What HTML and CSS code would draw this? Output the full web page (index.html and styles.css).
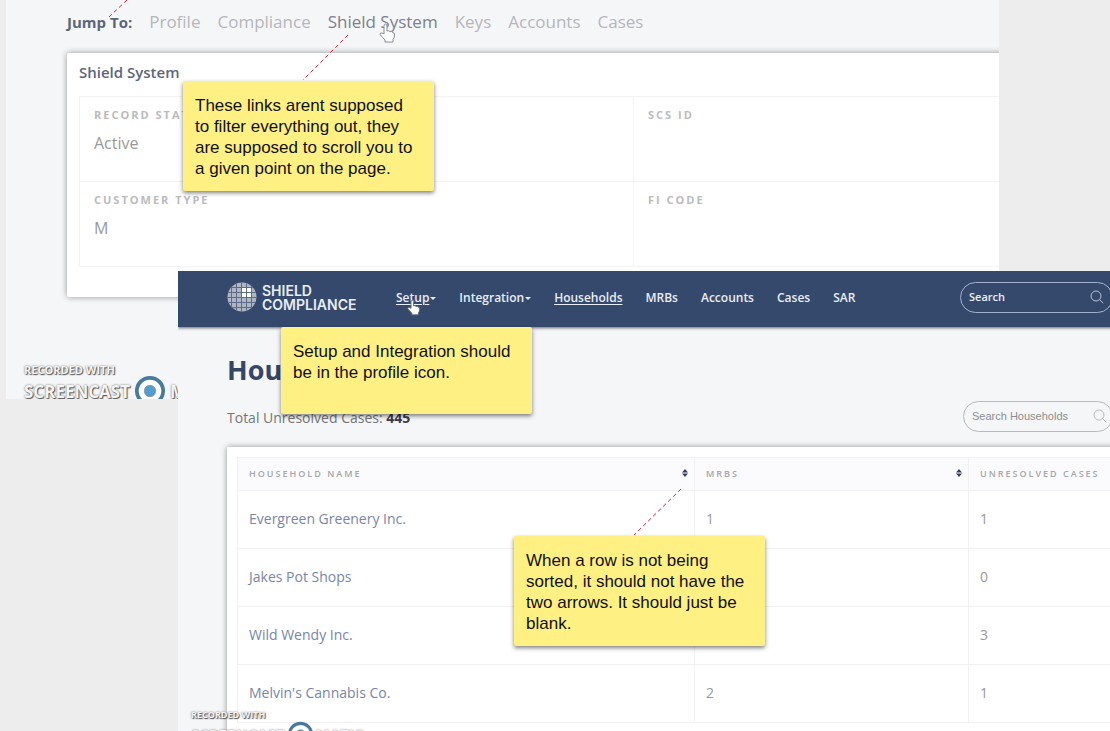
FILE: index.html
```html
<!DOCTYPE html>
<html lang="en">
<head>
<meta charset="utf-8">
<title>Shield Compliance review board</title>
<link rel="stylesheet" href="styles.css">
</head>
<body>
<main class="board">

  <section class="shot shot-record">
    <nav class="jump">
      <span class="jump-label">Jump To:</span>
      <a href="#">Profile</a>
      <a href="#">Compliance</a>
      <a href="#" class="current">Shield System</a>
      <a href="#">Keys</a>
      <a href="#">Accounts</a>
      <a href="#">Cases</a>
    </nav>
    <div class="card record-card">
      <h2>Shield System</h2>
      <dl class="fields">
        <div class="field"><dt>RECORD STATUS</dt><dd>Active</dd></div>
        <div class="field"><dt>SCS ID</dt><dd></dd></div>
        <div class="field"><dt>CUSTOMER TYPE</dt><dd>M</dd></div>
        <div class="field"><dt>FI CODE</dt><dd></dd></div>
      </dl>
    </div>
    <div class="recorder recorder-large">
      <span class="recorder-top">RECORDED WITH</span>
      <span class="recorder-row">SCREENCAST
        <svg class="recorder-ring" viewBox="0 0 34 34" aria-hidden="true"><circle cx="17" cy="17" r="14" fill="#fff" stroke="#48799f" stroke-width="4"/><circle cx="17" cy="17" r="6" fill="#4f9dd3" stroke="#8a9298"/></svg>
        MATIC</span>
    </div>
  </section>

  <section class="shot shot-households">
    <header class="topbar">
      <a href="#" class="brand">
        <svg class="globe" viewBox="0 0 30 30" aria-hidden="true">
          <defs><clipPath id="globe-clip"><circle cx="15" cy="15" r="14.5"/></clipPath></defs>
          <g clip-path="url(#globe-clip)">
            <rect width="30" height="30" fill="#aeb6c4"/>
            <path d="M15 6h4v4h-4zM20 6h4v4h-4zM15 11h4v4h-4zM20 11h4v4h-4z" fill="#fff"/>
            <path d="M4.500 0v30M9.500 0v30M14.500 0v30M19.500 0v30M24.500 0v30M0 5.500h30M0 10.500h30M0 15.500h30M0 20.500h30M0 25.500h30" stroke="#5d6b88" stroke-width="1"/>
          </g>
        </svg>
        <span>SHIELD<br>COMPLIANCE</span>
      </a>
      <nav class="menu">
        <a href="#" class="underlined has-caret">Setup</a>
        <a href="#" class="has-caret">Integration</a>
        <a href="#" class="underlined">Households</a>
        <a href="#">MRBs</a>
        <a href="#">Accounts</a>
        <a href="#">Cases</a>
        <a href="#">SAR</a>
      </nav>
      <label class="search search-dark">
        <input type="text" placeholder="Search" aria-label="Search">
        <svg viewBox="0 0 14 14" aria-hidden="true"><circle cx="6" cy="6" r="5"/><path d="M9.600 9.600l3.600 3.600"/></svg>
      </label>
    </header>

    <div class="content">
      <h1>Households</h1>
      <div class="summary">
        <p>Total Unresolved Cases: <strong>445</strong></p>
        <label class="search search-light">
          <input type="text" placeholder="Search Households" aria-label="Search Households">
          <svg viewBox="0 0 14 14" aria-hidden="true"><circle cx="6" cy="6" r="5"/><path d="M9.600 9.600l3.600 3.600"/></svg>
        </label>
      </div>
      <div class="card table-card">
        <table class="households">
          <colgroup><col class="col-name"><col class="col-mrbs"><col></colgroup>
          <thead>
            <tr>
              <th scope="col"><div class="head-cell">HOUSEHOLD NAME<svg class="sort" viewBox="0 0 6 8" aria-hidden="true"><path d="M0 3.500L3 0l3 3.500zM0 4.500h6L3 8z"/></svg></div></th>
              <th scope="col"><div class="head-cell">MRBS<svg class="sort" viewBox="0 0 6 8" aria-hidden="true"><path d="M0 3.500L3 0l3 3.500zM0 4.500h6L3 8z"/></svg></div></th>
              <th scope="col"><div class="head-cell">UNRESOLVED CASES</div></th>
            </tr>
          </thead>
          <tbody>
            <tr><td><a href="#">Evergreen Greenery Inc.</a></td><td>1</td><td>1</td></tr>
            <tr><td><a href="#">Jakes Pot Shops</a></td><td></td><td>0</td></tr>
            <tr><td><a href="#">Wild Wendy Inc.</a></td><td></td><td>3</td></tr>
            <tr><td><a href="#">Melvin's Cannabis Co.</a></td><td>2</td><td>1</td></tr>
          </tbody>
        </table>
      </div>
    </div>
    <div class="recorder recorder-small">
      <span class="recorder-top">RECORDED WITH</span>
      <span class="recorder-row">SCREENCAST
        <svg class="recorder-ring" viewBox="0 0 34 34" aria-hidden="true"><circle cx="17" cy="17" r="14" fill="#fff" stroke="#48799f" stroke-width="4"/><circle cx="17" cy="17" r="6" fill="#4f9dd3" stroke="#8a9298"/></svg>
        MATIC</span>
    </div>
  </section>

  <svg class="connectors" aria-hidden="true">
    <path d="M127 0L109 17M348 35L303 80M681 489L634 535"/>
  </svg>
  <svg class="hand hand-outline" viewBox="0 0 16 20" aria-hidden="true"><path d="M5 11V3q0-2 1.500-2T8 3v5q2-1 3 .7 2-.7 2.500.8Q16 9.500 15.500 12q0 3-1.500 4.500V19H6v-2Q4 15 1 11.500q0-2 2-1.500z"/></svg>
  <svg class="hand hand-solid" viewBox="0 0 16 20" aria-hidden="true"><path d="M5 11V3q0-2 1.500-2T8 3v5q2-1 3 .7 2-.7 2.500.8Q16 9.500 15.500 12q0 3-1.500 4.500V19H6v-2Q4 15 1 11.500q0-2 2-1.500z"/></svg>

  <aside class="note note-links">These links arent supposed<br>to filter everything out, they<br>are supposed to scroll you to<br>a given point on the page.</aside>
  <aside class="note note-setup">Setup and Integration should<br>be in the profile icon.</aside>
  <aside class="note note-sort">When a row is not being<br>sorted, it should not have the<br>two arrows. It should just be<br>blank.</aside>
</main>
</body>
</html>
```

FILE: styles.css
```css
* { box-sizing: border-box; }

body {
  margin: 0;
  font-family: "Open Sans", "Noto Sans", sans-serif;
  color: #777;
}

a { color: inherit; text-decoration: none; }
h1, h2, p, dl, dd { margin: 0; }

/* Free canvas holding the captures and the notes */
.board {
  position: relative;
  height: 100vh;
  overflow: hidden;
  background: #ededed;
}

.shot {
  position: absolute;
  overflow: hidden;
  background: #f5f6f8;
}

.shot-record { top: 0; left: 6px; right: 111px; height: 399px; }
.shot-households { top: 271px; left: 178px; right: -24px; bottom: 0; }

.card {
  background: #fff;
  box-shadow: 0 0 6px rgba(0, 0, 0, 0.4);
}

/* Record capture */
.jump {
  display: flex;
  gap: 17px;
  padding: 10px 0 0 61px;
  font-size: 17px;
  line-height: 24px;
  color: #b5b7bb;
}
.jump-label { font-size: 15px; font-weight: 700; color: #5c6679; }
.jump .current { color: #7c818b; }

.record-card {
  margin: 19px -20px 0 61px;
  padding: 8px 0 30px 12px;
  border-radius: 2px;
}
.record-card h2 {
  font-size: 15px;
  line-height: 22px;
  font-weight: 600;
  color: #5b667c;
}

.fields {
  display: grid;
  grid-template-columns: 554px 1fr;
  margin-top: 13px;
  border: solid #f3f3f5;
  border-width: 1px 0 0 1px;
}
.field {
  height: 85px;
  padding: 11px 14px;
  border: solid #f3f3f5;
  border-width: 0 1px 1px 0;
}
.field dt {
  font-size: 11px;
  line-height: 14px;
  font-weight: 700;
  letter-spacing: 2px;
  color: #bbbbbe;
}
.field dd { margin-top: 10px; font-size: 16px; line-height: 22px; color: #999; }

/* Households capture */
.topbar {
  display: flex;
  align-items: flex-start;
  height: 56px;
  padding: 11px 21px 0 49px;
  background: #35496d;
  box-shadow: 0 1px 3px rgba(0, 0, 0, 0.6);
  color: #e9edf5;
}
.brand {
  display: flex;
  gap: 5px;
  width: 169px;
  font-family: Inter, sans-serif;
  font-size: 14px;
  line-height: 14px;
  font-weight: 600;
}
.brand span { padding-top: 2px; }
.globe { width: 30px; height: 30px; }

.menu {
  display: flex;
  gap: 23px;
  padding-top: 7px;
  font-size: 12px;
  line-height: 18px;
  font-weight: 600;
}
.underlined { text-decoration: underline; text-underline-offset: 2px; }
.has-caret { display: flex; align-items: center; gap: 1px; }
.has-caret::after {
  content: "";
  border: 3px solid transparent;
  border-top-color: currentColor;
  border-bottom: 0;
}

.search {
  display: flex;
  align-items: center;
  margin-left: auto;
  height: 31px;
  padding: 0 8px 2px;
  border: 1px solid #b9b9bb;
  border-radius: 16px;
}
.search input {
  flex: 1;
  min-width: 0;
  padding: 0;
  border: 0;
  outline: 0;
  background: transparent;
  color: inherit;
}
.search input::placeholder { color: inherit; opacity: 1; }
.search svg { width: 14px; height: 14px; fill: none; stroke: currentColor; }
.search-dark { width: 153px; border-color: #a3b1cc; }
.search-dark input { font: 600 11px "Open Sans", sans-serif; }
.search-dark svg { stroke: #b6c1d6; }
.search-light { width: 150px; color: #8e8e8e; }
.search-light input { font: 11px "Liberation Sans", sans-serif; }
.search-light svg { margin-right: -3px; stroke: #bbb; }

.content { padding: 24px 0 0 49px; }
.content h1 { font-size: 27px; line-height: 38px; color: #364766; }
.summary {
  display: flex;
  align-items: center;
  margin-top: 12px;
  padding-right: 21px;
  font-size: 14px;
}
.summary strong { color: #413b4e; }
.summary p { padding-top: 2px; line-height: 20px; }

.table-card { margin-top: 15px; padding: 10px 0 24px 10px; }
.households {
  width: 100%;
  table-layout: fixed;
  border-collapse: collapse;
}
.col-name { width: 457px; }
.col-mrbs { width: 274px; }
.households th, .households td {
  padding: 0 6px 2px 11px;
  border: 1px solid #f1f1f4;
  text-align: left;
}
.households th {
  height: 33px;
  background: #fbfbfd;
  font-size: 9px;
  font-weight: 600;
  letter-spacing: 2px;
  color: #a4a6ab;
}
.households td { height: 58px; font-size: 14px; color: #999; }
.households td a { color: #7886a6; }
.head-cell { display: flex; align-items: center; justify-content: space-between; }
.sort { width: 6px; height: 8px; fill: #35405c; }

/* Screen recorder watermark */
.recorder {
  position: absolute;
  font-weight: 700;
  color: #f4f4f4;
  text-shadow: 1px 1px 1px #555, 0 0 2px #666;
  white-space: nowrap;
}
.recorder span { display: flex; align-items: center; }
.recorder-large { top: 362px; left: 18px; font-size: 17px; }
.recorder-large .recorder-top { font-size: 11px; line-height: 16px; }
.recorder-large .recorder-row { gap: 4px; height: 26px; }
.recorder-large .recorder-ring { width: 32px; height: 32px; }
.recorder-small { top: 437px; left: 13px; font-size: 15px; }
.recorder-small .recorder-top { font-size: 9px; line-height: 13px; }
.recorder-small .recorder-row { gap: 2px; height: 26px; }
.recorder-small .recorder-ring { width: 27px; height: 27px; }

/* Annotations */
.connectors {
  position: absolute;
  inset: 0;
  width: 100%;
  height: 100%;
  fill: none;
  stroke: #d0213c;
  stroke-dasharray: 4 3;
}
.hand { position: absolute; width: 16px; height: 20px; fill: #fff; }
.hand-outline { top: 23px; left: 379px; stroke: #888d96; }
.hand-solid { top: 299px; left: 407px; width: 13px; height: 17px; stroke: #5a6680; }

.note {
  position: absolute;
  width: 251px;
  min-height: 87px;
  padding: 14px 12px 12px;
  border-radius: 2px;
  background: #fef082;
  box-shadow: 0 2px 4px rgba(0, 0, 0, 0.5);
  font-family: "Liberation Sans", Arial, sans-serif;
  font-size: 17px;
  line-height: 21px;
  color: #111;
  white-space: nowrap;
}
.note-links { top: 81px; left: 183px; }
.note-setup { top: 327px; left: 281px; }
.note-sort { top: 536px; left: 514px; }
```
